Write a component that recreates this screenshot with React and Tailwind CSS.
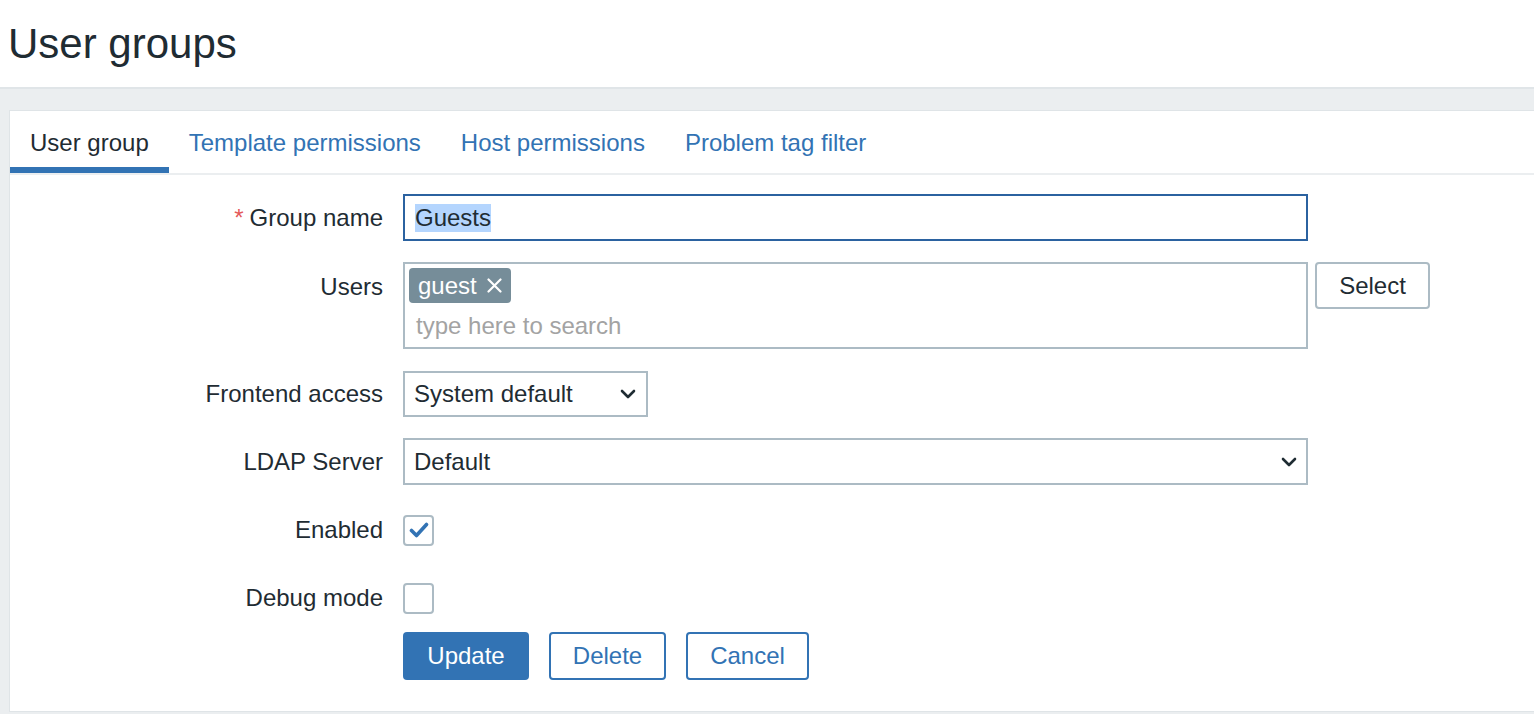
import React from "react";

const font = { fontFamily: '"Liberation Sans", Arial, sans-serif' };

function Chevron() {
  return (
    <svg width="16" height="10" viewBox="0 0 16 10" fill="none">
      <path d="M2 2l6 6 6-6" stroke="#1f2c33" strokeWidth="2.6" strokeLinecap="round" strokeLinejoin="round" />
    </svg>
  );
}

function Row({ label, required, top, height, align = "items-center", labelPad = "", children }) {
  return (
    <div className={`flex ${align} ${top}`} style={{ minHeight: height }}>
      <div className={`w-[373px] shrink-0 text-right text-[24px] text-[#1f2c33] ${labelPad}`}>
        {required && <span className="mr-[6px] text-[#e45959]">*</span>}
        {label}
      </div>
      <div className="ml-[20px] flex items-center">{children}</div>
    </div>
  );
}

function Checkbox({ checked }) {
  return (
    <div className="flex h-[31px] w-[31px] items-center justify-center rounded-[4px] border-2 border-[#acbbc4] bg-white">
      {checked && (
        <svg width="20" height="16" viewBox="0 0 20 16" fill="none">
          <path d="M2.5 8.5l5 5L17.5 2.5" stroke="#3273b4" strokeWidth="3.6" strokeLinecap="round" strokeLinejoin="round" />
        </svg>
      )}
    </div>
  );
}

export default function App() {
  const tabs = ["Template permissions", "Host permissions", "Problem tag filter"];
  return (
    <div className="h-[714px] overflow-hidden bg-[#ebeef0]" style={font}>
      <header className="flex h-[89px] items-center border-b-2 border-[#e0e5e8] bg-white pl-[8px]">
        <h1 className="text-[42px] leading-none text-[#1f2c33]">User groups</h1>
      </header>

      <div className="pl-[9px] pt-[21px]">
        <div className="h-[602px] border border-r-0 border-[#dfe4e7] bg-white">
          <nav className="flex h-[64px] border-b-2 border-[#ebeef0] text-[24px]">
            <div className="flex items-center border-b-[6px] border-[#3273b4] px-[20px] pt-[8px] text-[#1f2c33]">
              User group
            </div>
            {tabs.map((t) => (
              <div key={t} className="flex items-center px-[20px] pb-[6px] pt-[8px] text-[#3273b4]">
                {t}
              </div>
            ))}
          </nav>

          <Row label="Group name" required top="mt-[19px]" height={47}>
            <div className="flex h-[47px] w-[905px] items-center border-2 border-[#2b62a0] px-[10px] text-[24px] text-[#1f2c33]">
              <span className="bg-[#b4d5fe] leading-[28px]">Guests</span>
            </div>
          </Row>

          <Row label="Users" top="mt-[21px]" height={87} align="items-start" labelPad="pt-[7px]">
            <div className="flex items-start">
              <div className="h-[87px] w-[905px] border-2 border-[#acbbc4] px-[4px] pt-[4px]">
                <div className="flex h-[35px] w-[102px] items-center rounded-[4px] bg-[#768d99] pl-[9px] text-[24px] text-white">
                  guest
                  <svg className="ml-[10px]" width="15" height="15" viewBox="0 0 15 15" fill="none">
                    <path d="M1.5 1.5l12 12M13.5 1.5l-12 12" stroke="white" strokeWidth="2.2" strokeLinecap="round" />
                  </svg>
                </div>
                <div className="mt-[7px] pl-[7px] text-[24px] leading-[32px] text-[#a3a3a3]">type here to search</div>
              </div>
              <button className="ml-[7px] h-[47px] w-[115px] rounded-[4px] border-2 border-[#acbbc4] bg-white text-[24px] text-[#1f2c33]">
                Select
              </button>
            </div>
          </Row>

          <Row label="Frontend access" top="mt-[22px]" height={46}>
            <div className="flex h-[46px] w-[245px] items-center justify-between border-2 border-[#acbbc4] pl-[9px] pr-[10px] text-[24px] text-[#1f2c33]">
              System default
              <Chevron />
            </div>
          </Row>

          <Row label="LDAP Server" top="mt-[21px]" height={47}>
            <div className="flex h-[47px] w-[905px] items-center justify-between border-2 border-[#acbbc4] pl-[9px] pr-[9px] text-[24px] text-[#1f2c33]">
              Default
              <Chevron />
            </div>
          </Row>

          <Row label="Enabled" top="mt-[22px]" height={46}>
            <Checkbox checked />
          </Row>

          <Row label="Debug mode" top="mt-[22px]" height={46}>
            <Checkbox />
          </Row>

          <div className="ml-[393px] mt-[11px] flex gap-[20px] text-[24px]">
            <button className="h-[48px] w-[126px] rounded-[4px] bg-[#3273b4] text-white">Update</button>
            <button className="h-[48px] w-[117px] rounded-[4px] border-2 border-[#3273b4] bg-white text-[#3273b4]">
              Delete
            </button>
            <button className="h-[48px] w-[123px] rounded-[4px] border-2 border-[#3273b4] bg-white text-[#3273b4]">
              Cancel
            </button>
          </div>
        </div>
      </div>
    </div>
  );
}
